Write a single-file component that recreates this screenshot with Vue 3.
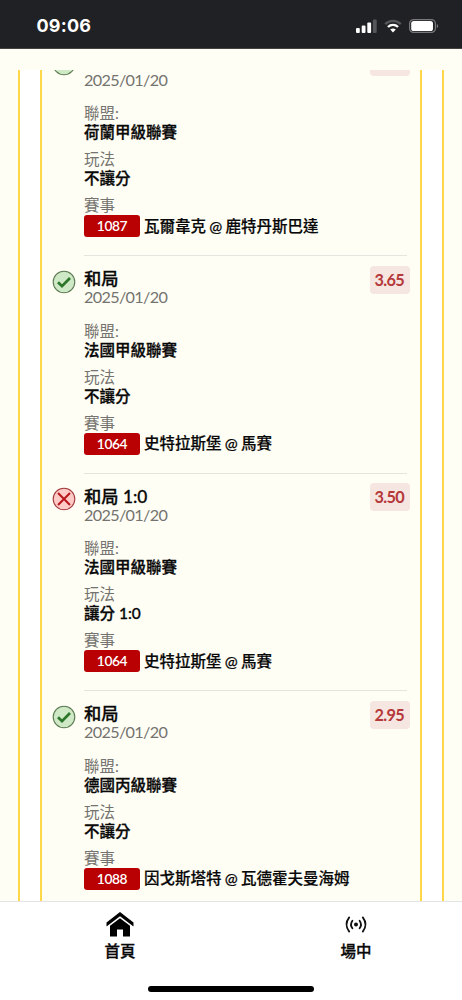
<script setup>
const bets = [
  { title: '', won: true, date: '2025/01/20', odds: '', league: '荷蘭甲級聯賽', play: '不讓分', code: '1087', match: '瓦爾韋克 @ 鹿特丹斯巴達' },
  { title: '和局', won: true, date: '2025/01/20', odds: '3.65', league: '法國甲級聯賽', play: '不讓分', code: '1064', match: '史特拉斯堡 @ 馬賽' },
  { title: '和局 1:0', won: false, date: '2025/01/20', odds: '3.50', league: '法國甲級聯賽', play: '讓分 1:0', code: '1064', match: '史特拉斯堡 @ 馬賽' },
  { title: '和局', won: true, date: '2025/01/20', odds: '2.95', league: '德國丙級聯賽', play: '不讓分', code: '1088', match: '因戈斯塔特 @ 瓦德霍夫曼海姆' },
]
</script>

<template>
  <div class="phone">
    <header class="status">
      <span class="time">09:06</span>
      <div class="indicators">
        <svg width="21" height="14" viewBox="0 0 21 14">
          <rect x="0" y="9" width="3.8" height="5" rx="1" fill="#fff" />
          <rect x="5.7" y="6.5" width="3.8" height="7.5" rx="1" fill="#fff" />
          <rect x="11.3" y="3.5" width="3.8" height="10.5" rx="1" fill="#fff" />
          <rect x="16.9" y="0.5" width="3.8" height="13.5" rx="1" fill="#55565a" />
        </svg>
        <svg class="wifi" width="18" height="14" viewBox="0 0 18 14" fill="none">
          <path d="M1.2 5.2C5.5 .8 12.5 .8 16.8 5.2" stroke="#55565a" stroke-width="2.4" />
          <path d="M4 8C6.8 5.2 11.2 5.2 14 8" stroke="#fff" stroke-width="2.4" />
          <path d="M6.2 10.6Q9 8.2 11.8 10.6L9 13.5Z" fill="#fff" />
        </svg>
        <svg width="30" height="14" viewBox="0 0 30 14">
          <rect x=".6" y=".6" width="25.8" height="12.8" rx="4" fill="none" stroke="#77787b" stroke-width="1.2" />
          <rect x="2.2" y="2" width="21.8" height="10" rx="2.6" fill="#fff" />
          <path d="M27.8 4.7Q30.6 7 27.8 9.3Z" fill="#77787b" />
        </svg>
      </div>
    </header>

    <main class="viewport">
      <div class="outer">
        <div class="card">
          <article v-for="(bet, i) in bets" :key="i" class="bet">
            <svg class="mark" width="24" height="24" viewBox="0 0 24 24" fill="none">
              <template v-if="bet.won">
                <circle cx="12" cy="12" r="10.8" fill="#cfe8c5" stroke="#5b7a52" stroke-width="1.1" />
                <path d="M6 12.2L10 16.2L18 8" stroke="#2c762b" stroke-width="2.7" />
              </template>
              <template v-else>
                <circle cx="12" cy="12" r="10.8" fill="#ffcbc7" stroke="#a13a3e" stroke-width="1.1" />
                <path d="M6 6L18 18M18 6L6 18" stroke="#b9191d" stroke-width="2.1" />
              </template>
            </svg>
            <div class="info">
              <div class="head">
                <div>
                  <div class="title">{{ bet.title }}</div>
                  <div class="date">{{ bet.date }}</div>
                </div>
                <div class="odds">{{ bet.odds }}</div>
              </div>
              <div class="label">聯盟:</div>
              <div class="value">{{ bet.league }}</div>
              <div class="label">玩法</div>
              <div class="value">{{ bet.play }}</div>
              <div class="label">賽事</div>
              <div class="match">
                <span class="code">{{ bet.code }}</span>
                <span class="teams">{{ bet.match }}</span>
              </div>
            </div>
          </article>
        </div>
      </div>
    </main>

    <nav class="tabs">
      <div class="tab">
        <svg width="28" height="25" viewBox="0 0 28 25">
          <path d="M14 0L27.5 10.5V14.5L14 4.2L.5 14.5V10.5Z" fill="#000" />
          <path d="M14 6.2L24 13.8V24.5H17V17.5H11V24.5H4V13.8Z" fill="#000" />
        </svg>
        <span>首頁</span>
      </div>
      <div class="tab">
        <svg width="28" height="25" viewBox="0 0 28 25" fill="none" stroke="#111" stroke-width="1.8" stroke-linecap="round">
          <circle cx="14" cy="12.5" r="2" fill="#111" stroke="none" />
          <path d="M10.4 8.7Q7.6 12.5 10.4 16.3M17.6 8.7Q20.4 12.5 17.6 16.3M7.2 5.4Q1.8 12.5 7.2 19.6M20.8 5.4Q26.2 12.5 20.8 19.6" />
        </svg>
        <span>場中</span>
      </div>
      <div class="home-bar"></div>
    </nav>
  </div>
</template>

<style>
body { margin: 0; }
</style>

<style scoped>
* { box-sizing: border-box; }
.phone {
  width: 462px;
  height: 1000px;
  display: flex;
  flex-direction: column;
  overflow: hidden;
  background: #fffef5;
  color: #080808;
  font-family: Lato, "Noto Sans CJK TC", sans-serif;
  font-size: 15.5px;
}
.status {
  height: 49px;
  flex: none;
  background: #202124;
  border-bottom: 1px solid #45433f;
  display: flex;
  justify-content: space-between;
  align-items: center;
  padding: 3px 23px 0 36.5px;
}
.time {
  color: #fff;
  font: 700 18px/24px Inter, sans-serif;
  letter-spacing: .2px;
}
.indicators { display: flex; align-items: center; }
.indicators svg { display: block; }
.wifi { margin: 0 7px 0 7px; }
.viewport {
  height: 831px;
  flex: none;
  margin-top: 21px;
  padding: 0 18px;
  overflow: hidden;
}
.outer {
  height: 831px;
  background: #fff;
  border: solid #ffd84a;
  border-width: 0 2px;
  padding: 0 20px;
}
.card {
  height: 831px;
  background: #fffef5;
  border: solid #ffd84a;
  border-width: 0 2px;
  padding: 0 13px 0 9.5px;
  overflow: hidden;
}
.bet { display: flex; height: 217.5px; }
.bet:first-child { margin-top: -31.5px; }
.mark { flex: none; margin: 13.5px 8.5px 0 0; }
.info {
  flex: 1;
  padding-top: 12px;
  border-bottom: 1px solid #e6e4df;
}
.head {
  display: flex;
  justify-content: space-between;
  height: 53.5px;
}
.title { height: 21px; font-size: 17.3px; font-weight: 500; -webkit-text-stroke: .3px currentColor; line-height: 21px; }
.date { color: #74736f; line-height: 16px; font-size: 16.2px; letter-spacing: -.66px; }
.odds {
  width: 40px;
  height: 28px;
  margin: -2.5px -3px 0 0;
  padding-right: 1.5px;
  border-radius: 4px;
  background: #f6e6e1;
  color: #b5383a;
  font-size: 16.3px;
  font-weight: 700;
  letter-spacing: -.7px;
  line-height: 28px;
  text-align: center;
}
.label { color: #74736f; line-height: 18px; }
.value { font-weight: 500; -webkit-text-stroke: .3px currentColor; line-height: 20px; margin-bottom: 8px; }
.match {
  display: flex;
  align-items: center;
  gap: 4px;
  margin-top: 1px;
  height: 22px;
  white-space: nowrap;
}
.teams { font-weight: 500; -webkit-text-stroke: .2px currentColor; line-height: 20px; margin-top: -1px; word-spacing: -.7px; }
.code {
  width: 56px;
  height: 22px;
  border-radius: 3px;
  background: #b90003;
  color: #fff;
  font-size: 13.8px;
  font-weight: 600;
  letter-spacing: -.4px;
  line-height: 22px;
  text-align: center;
}
.tabs {
  position: relative;
  flex: 1;
  display: flex;
  background: #fff;
  border-top: 1px solid #e3e3e3;
}
.tab {
  width: 236px;
  flex: none;
  display: flex;
  flex-direction: column;
  align-items: center;
  padding-top: 9.5px;
  padding-left: 4px;
  font-weight: 500;
  -webkit-text-stroke: .3px currentColor;
}
.tab span { line-height: 22px; margin-top: 3px; }
.home-bar {
  position: absolute;
  left: 148px;
  top: 84px;
  width: 166px;
  height: 6px;
  border-radius: 3px;
  background: #000;
}
</style>
